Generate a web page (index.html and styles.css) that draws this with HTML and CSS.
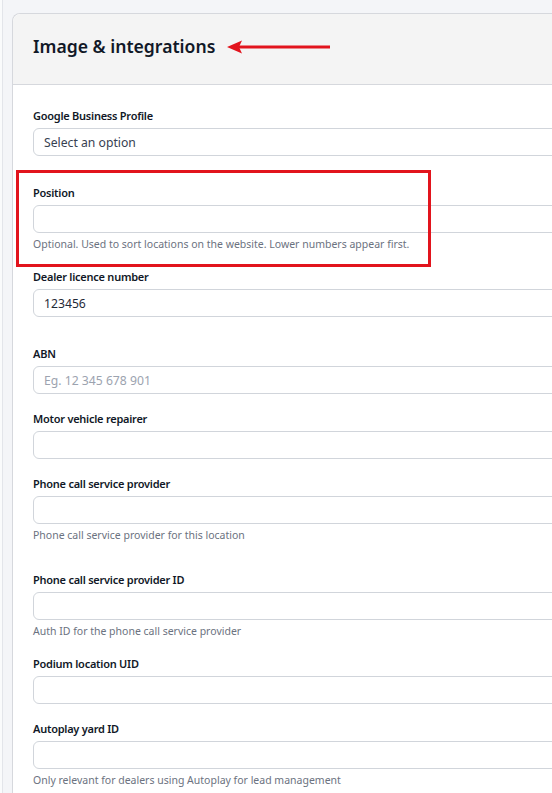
FILE: index.html
```html
<!DOCTYPE html>
<html lang="en">
<head>
<meta charset="utf-8">
<title>Image &amp; integrations</title>
<link rel="stylesheet" href="styles.css">
</head>
<body>
<div class="page">
  <section class="card">
    <header class="card-header">
      <h2 class="card-title">Image &amp; integrations</h2>
      <svg class="arrow" width="104" height="14" viewBox="0 0 104 14" aria-hidden="true">
        <line x1="11" y1="7" x2="103" y2="7" stroke="#e2141d" stroke-width="3"/>
        <polygon points="0,7 15,0.5 12,7 15,13.5" fill="#e2141d"/>
      </svg>
    </header>
    <div class="card-body">
      <div class="field field--loose">
        <label class="label">Google Business Profile</label>
        <div class="input"><span class="value value--select">Select an option</span></div>
      </div>
      <div class="field field--marked">
        <label class="label">Position</label>
        <div class="input"></div>
        <p class="help">Optional. Used to sort locations on the website. Lower numbers appear first.</p>
        <div class="highlight"></div>
      </div>
      <div class="field field--loose">
        <label class="label">Dealer licence number</label>
        <div class="input"><span class="value">123456</span></div>
      </div>
      <div class="field">
        <label class="label">ABN</label>
        <div class="input"><span class="value value--placeholder">Eg. 12 345 678 901</span></div>
      </div>
      <div class="field">
        <label class="label">Motor vehicle repairer</label>
        <div class="input"></div>
      </div>
      <div class="field field--loose">
        <label class="label">Phone call service provider</label>
        <div class="input"></div>
        <p class="help">Phone call service provider for this location</p>
      </div>
      <div class="field">
        <label class="label">Phone call service provider ID</label>
        <div class="input"></div>
        <p class="help">Auth ID for the phone call service provider</p>
      </div>
      <div class="field">
        <label class="label">Podium location UID</label>
        <div class="input"></div>
      </div>
      <div class="field">
        <label class="label">Autoplay yard ID</label>
        <div class="input"></div>
        <p class="help">Only relevant for dealers using Autoplay for lead management</p>
      </div>
    </div>
  </section>
</div>
</body>
</html>
```

FILE: styles.css
```css
html, body {
  margin: 0;
  padding: 0;
  overflow: hidden;
  background: #fafbfc;
}

body {
  font-family: "Noto Sans", "Open Sans", sans-serif;
  color: #111827;
  width: 552px;
  height: 793px;
}

.page {
  margin-left: 2px;
  border-left: 1px solid #e3e5ea;
  background: #f4f5f8;
  padding: 13px 0 0 9px;
  height: 780px;
}

.card {
  width: 640px;
  background: #ffffff;
  border: 1px solid #d6d8dd;
  border-right: none;
  border-radius: 8px 0 0 0;
}

.card-header {
  box-sizing: border-box;
  display: flex;
  align-items: center;
  gap: 12px;
  height: 71px;
  padding: 0 20px 7px;
  background: #f4f4f4;
  border-bottom: 1px solid #d6d8dd;
  border-radius: 8px 0 0 0;
}

.card-title {
  margin: 0;
  font-size: 17.6px;
  font-weight: 600;
  color: #111827;
  line-height: 24px;
}

.arrow {
  display: block;
  margin-top: 2px;
}

.card-body {
  padding: 23px 0 20px 20px;
}

.field {
  position: relative;
  margin-bottom: 17px;
}

.field--loose {
  margin-bottom: 29px;
}

.label {
  display: block;
  font-size: 11px;
  font-weight: 600;
  letter-spacing: -0.25px;
  line-height: 16px;
  margin-bottom: 4px;
  color: #111827;
}

.input {
  box-sizing: border-box;
  height: 28px;
  width: 560px;
  border: 1px solid #d1d5db;
  border-radius: 6px;
  background: #fff;
  display: flex;
  align-items: center;
  padding-left: 10px;
}

.value {
  font-size: 12.2px;
  color: #1f2937;
}

.value--select {
  color: #374151;
}

.value--placeholder {
  color: #9ca3af;
}

.help {
  margin: 4px 0 0;
  font-size: 10.5px;
  line-height: 15px;
  color: #6b7280;
}

.highlight {
  position: absolute;
  left: -17px;
  top: -15px;
  width: 415px;
  height: 97px;
  box-sizing: border-box;
  border: 3px solid #e2141d;
  pointer-events: none;
}
```
